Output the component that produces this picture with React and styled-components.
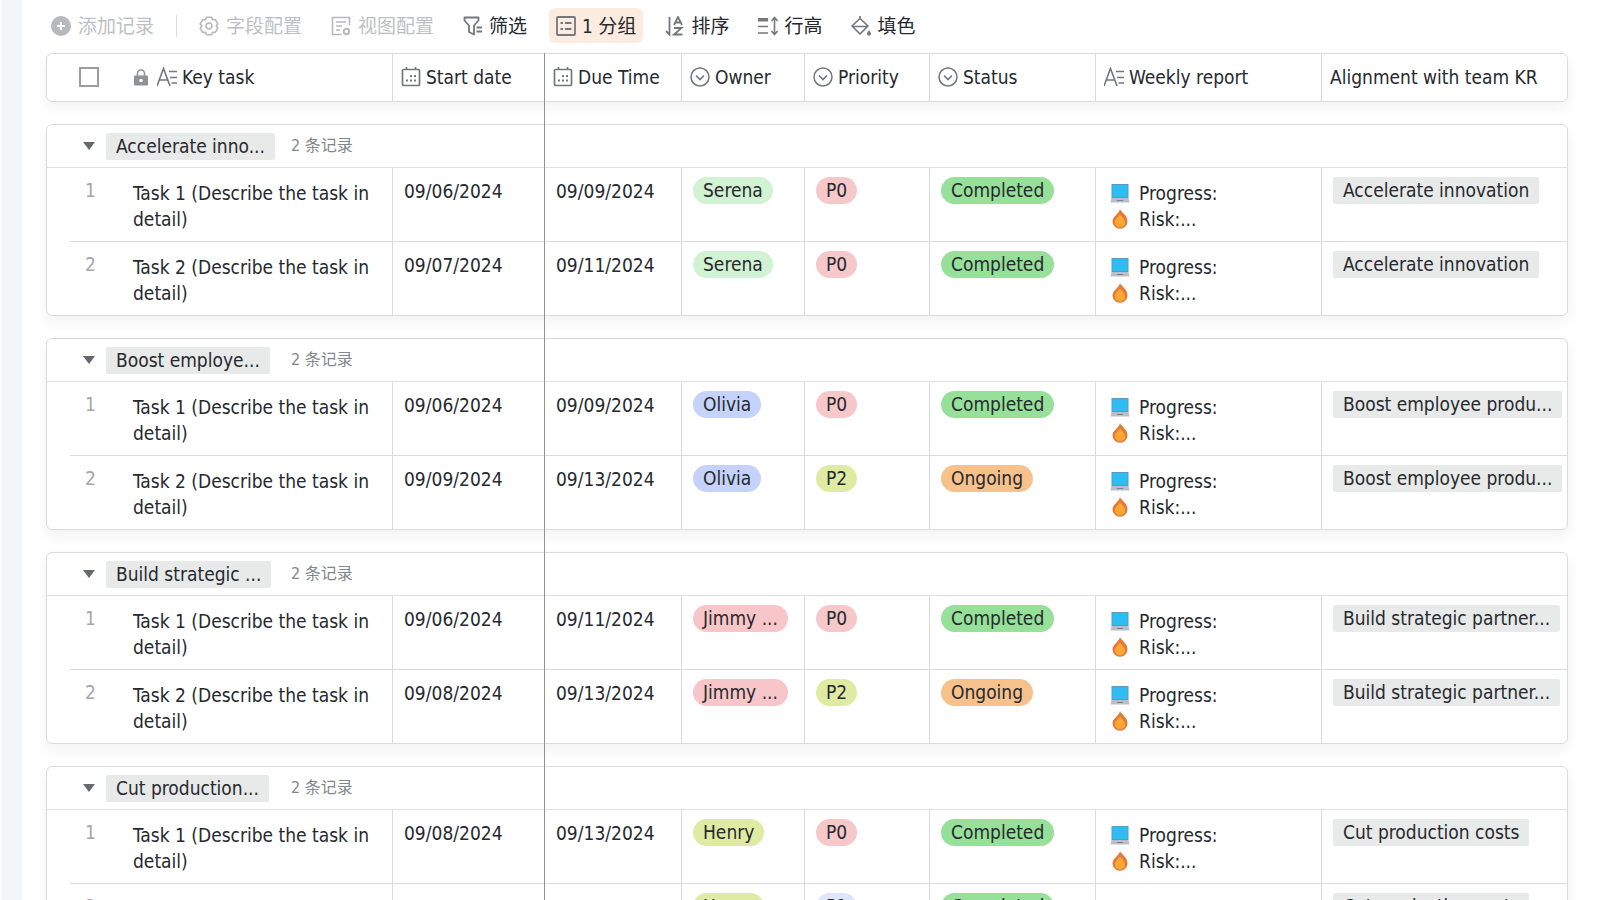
import { useState } from "react";
import styled, { createGlobalStyle } from "styled-components";

const GlobalStyle = createGlobalStyle`
    *{
        box-sizing: border-box;
    }
    body{
        margin: 0;
        background-color: #fff;
        color: #26292e;
        font-family: "DejaVu Sans Condensed", "Noto Sans CJK SC", sans-serif;
        font-size: 19px;
        line-height: 26px;
    }
    button, input{
        font: inherit;
        color: inherit;
    }
`

const Page = styled.div`
    display: flex;
    height: 100vh;
    overflow: hidden;
`

const SideEdge = styled.aside`
    flex: none;
    width: 22px;
    background-color: #f3f5f8;
    border-left: 2px solid #fbfbfc;
`

const Main = styled.main`
    flex: 1;
    min-width: 0;
    padding-right: 32px;
`

const StyledToolbar = styled.div`
    display: flex;
    align-items: center;
    gap: 15px;
    height: 53px;
    padding: 0 22px 2px;
`

const ToolButton = styled.button`
    display: flex;
    align-items: center;
    gap: 6px;
    height: 35px;
    padding: 0 7px;
    border: none;
    border-radius: 6px;
    background-color: ${({ $active }) => $active ? "#fcebdf" : "transparent"};
    white-space: nowrap;
    cursor: pointer;
    >svg{
        color: #74777c;
    }
    &:disabled{
        gap: 7px;
        color: #bdbfc2;
        cursor: default;
        >svg{
            color: #b7b9bc;
        }
    }
`

const Divider = styled.span`
    width: 1px;
    height: 22px;
    background-color: #d9dbde;
`

const Table = styled.table`
    position: relative;
    display: flex;
    flex-direction: column;
    gap: 22px;
    margin-left: 24px;
    /* edge of the frozen columns */
    &::after{
        content: "";
        position: absolute;
        top: 0;
        bottom: 0;
        left: calc(72px + (100% - 74px) * 426 / 1448);
        width: 1px;
        background-color: #909396;
    }
`

const cardStyle = `
    display: block;
    border: 1px solid #d9dbdc;
    border-radius: 6px;
    background-color: #fff;
    box-shadow: 0 6px 14px rgba(31, 35, 41, 0.06);
`

const HeadCard = styled.thead`
    ${cardStyle}
`

const GroupCard = styled.tbody`
    ${cardStyle}
`

const Row = styled.tr`
    display: grid;
    grid-template-columns: 72px 274fr 152fr 137fr 123fr 125fr 166fr 226fr 245fr;
`

const HeadCell = styled.th`
    display: flex;
    align-items: center;
    gap: 5px;
    height: 47px;
    min-width: 0;
    padding: 0 8px 1px;
    border-right: 1px solid #d9dbdc;
    font-weight: 400;
    white-space: nowrap;
    >svg{
        flex: none;
        color: #74777c;
    }
    &:first-child{
        padding-left: 32px;
        border-right: none;
    }
    &:nth-child(2){
        padding-left: 15px;
    }
    &:last-child{
        border-right: none;
    }
`

const HeadIcons = styled.span`
    display: flex;
    align-items: center;
    gap: 9px;
    color: #74777c;
`

const Checkbox = styled.input`
    appearance: none;
    flex: none;
    width: 20px;
    height: 20px;
    margin: 0;
    border: 2px solid #9b9da1;
    background-color: #fff;
    &:checked{
        background-color: #9b9da1;
    }
`

const GroupRow = styled.tr`
    display: block;
    border-bottom: 1px solid #dfe1e2;
`

const GroupCell = styled.th`
    display: flex;
    align-items: center;
    height: 42px;
    padding-left: 32px;
    font-weight: 400;
    text-align: left;
`

const Toggle = styled.button`
    display: flex;
    align-items: center;
    justify-content: center;
    width: 20px;
    height: 26px;
    margin-right: 7px;
    padding: 0;
    border: none;
    background: none;
    cursor: pointer;
    >svg{
        transform: rotate(${({ $open }) => $open ? 0 : -90}deg);
    }
`

const GroupName = styled.span`
    width: 185px;
`

const Count = styled.span`
    color: #83878d;
    font-size: 16px;
`

const Cell = styled.td`
    height: 73px;
    min-width: 0;
    padding: 9px 4px 0 11px;
    border-right: 1px solid #d9dbdc;
    white-space: nowrap;
    &:last-child{
        border-right: none;
    }
`

const IndexCell = styled(Cell)`
    margin-left: 23px;
    padding-left: 15px;
    border-right: none;
    color: #a3a6aa;
`

const TextCell = styled(Cell)`
    padding: 12px 14px 0;
    white-space: normal;
`

const DateCell = styled(Cell)`
    padding-top: 10px;
`

const TaskRow = styled(Row)`
    & + & > td{
        height: 74px;
        border-top: 1px solid #d9dbdc;
    }
`

const Tag = styled.span`
    display: inline-block;
    max-width: 100%;
    padding: 0 10px;
    border-radius: 14px;
    background-color: ${({ $color }) => $color};
    line-height: 27px;
    vertical-align: top;
`

const Chip = styled.span`
    display: inline-block;
    padding: 0 10px;
    border-radius: 2px;
    background-color: #e8eae9;
    line-height: 27px;
    vertical-align: top;
`

const ReportLine = styled.div`
    display: flex;
    align-items: center;
    gap: 9px;
`

const PlusIcon = () => (
    <svg width="20" height="20" viewBox="0 0 20 20">
        <circle cx="10" cy="10" r="10" fill="currentColor" />
        <path d="M10 6v8M6 10h8" stroke="#fff" strokeWidth="2" />
    </svg>
);

const GearIcon = () => (
    <svg width="20" height="20" viewBox="0 0 20 20" fill="none" stroke="currentColor" strokeWidth="1.6" strokeLinejoin="round">
        <path d="M7.500 1.200h5l1 2.600 2.800-.2 2.500 4.200L17.200 10l1.600 2.200-2.500 4.200-2.800-.2-1 2.600h-5l-1-2.600-2.800.2-2.500-4.200L2.800 10 1.200 7.800l2.500-4.200 2.800.2z" />
        <circle cx="10" cy="10" r="3" />
    </svg>
);

const ViewIcon = () => (
    <svg width="20" height="20" viewBox="0 0 20 20" fill="none" stroke="currentColor" strokeWidth="1.6">
        <path d="M18.500 9.500V1.500H1.500v17h9" />
        <path d="M5 6h10M5 10h6M5 14h4" />
        <circle cx="15.500" cy="15.500" r="2.700" strokeWidth="2" />
    </svg>
);

const FilterIcon = () => (
    <svg width="20" height="20" viewBox="0 0 20 20" fill="none" stroke="currentColor" strokeWidth="1.8" strokeLinejoin="round">
        <path d="M1.500 1.500h14v3L11 9.500v9l-5-2.500V9.500l-4.500-5z" />
        <path d="M13.500 11.500H19M13.500 15.500H19" />
    </svg>
);

const GroupIcon = () => (
    <svg width="20" height="20" viewBox="0 0 20 20" fill="none" stroke="currentColor" strokeWidth="1.8">
        <rect x="1" y="1" width="18" height="18" rx="1" />
        <path d="M4.500 7h2.500M4.500 13h2.500M9 7h6.500M9 13h6.500" />
    </svg>
);

const SortIcon = () => (
    <svg width="20" height="20" viewBox="0 0 20 20" fill="none" stroke="currentColor" strokeWidth="1.8">
        <path d="M4.500 1v17.500L1 15" />
        <path d="M9 9l4-8 4 8M10.500 6.500h5M9 12h7.500L9 18.500h8.500" />
    </svg>
);

const RowHeightIcon = () => (
    <svg width="20" height="20" viewBox="0 0 20 20" fill="none" stroke="currentColor" strokeWidth="1.6">
        <rect x="0" y="2" width="10" height="3.500" fill="currentColor" stroke="none" />
        <path d="M0 10.500h10M0 17h10M16.500 2v16M13.500 5l3-3.500 3 3.500M13.500 15l3 3.500 3-3.500" />
    </svg>
);

const FillIcon = () => (
    <svg width="20" height="20" viewBox="0 0 20 20" fill="none" stroke="currentColor" strokeWidth="1.7" strokeLinejoin="round">
        <path d="M9 0v3.500M9 2.500l8 7.500-8 8-8-8zM2 10.500h14" />
        <path d="M18 14c1.500 2.200 2 3 2 3.800a2 2 0 0 1-4 0c0-.8.500-1.600 2-3.800z" fill="currentColor" stroke="none" />
    </svg>
);

const LockIcon = () => (
    <svg width="14" height="20" viewBox="0 0 14 20">
        <path d="M3.500 9V6.500a3.500 3.500 0 0 1 7 0V9" fill="none" stroke="#8f9196" strokeWidth="1.6" />
        <rect x="0" y="8.500" width="14" height="10" rx="1" fill="#8f9196" />
        <circle cx="7" cy="13.500" r="1.800" fill="#fff" />
    </svg>
);

const TextIcon = () => (
    <svg width="20" height="20" viewBox="0 0 20 20" fill="none" stroke="currentColor" strokeWidth="1.600">
        <path d="M0 19L6.500 1.500l6.500 17.500M2.500 13h8M12 4.500h8M13 10.500h7M14.500 16h5.500" />
    </svg>
);

const CalendarIcon = () => (
    <svg width="20" height="20" viewBox="0 0 20 20" fill="none" stroke="currentColor" strokeWidth="1.700">
        <rect x="1.500" y="2.500" width="17" height="16" rx="1" />
        <path d="M5.500 0v3M14.500 0v3" />
        <path d="M9 9h2M13 9h2M5 13.500h2M9 13.500h2M13 13.500h2" strokeWidth="2" />
    </svg>
);

const SelectIcon = () => (
    <svg width="20" height="20" viewBox="0 0 20 20" fill="none" stroke="currentColor" strokeWidth="1.500">
        <circle cx="10" cy="10" r="9" />
        <path d="M6 8.500l4 4 4-4" strokeWidth="1.700" />
    </svg>
);

const LaptopIcon = () => (
    <svg width="20" height="20" viewBox="0 0 20 20">
        <rect x="1.500" y="1" width="17" height="14" fill="#5b9cb8" />
        <rect x="2.500" y="2" width="15" height="12" fill="#2dbdf2" />
        <path d="M1.500 15h17l1 4.500H.5z" fill="#b9bec8" />
        <path d="M7 17.500h6" stroke="#7d828c" />
    </svg>
);

const FlameIcon = () => (
    <svg width="20" height="20" viewBox="0 0 20 20">
        <path d="M10 0c.8 3 7.500 6 7.500 12.200A7.400 7.400 0 0 1 10 19.800a7.400 7.400 0 0 1-7.500-7.600C2.500 7.500 9 5 10 0z" fill="#e07c38" />
        <path d="M10 5.500c.8 2 5 4 5 8a5 5 0 0 1-10 0c0-4 4.200-6 5-8z" fill="#ffa634" />
    </svg>
);

const columns = [
    { title: "Start date", Icon: CalendarIcon },
    { title: "Due Time", Icon: CalendarIcon },
    { title: "Owner", Icon: SelectIcon },
    { title: "Priority", Icon: SelectIcon },
    { title: "Status", Icon: SelectIcon },
    { title: "Weekly report", Icon: TextIcon },
    { title: "Alignment with team KR" },
];

const colors = {
    Serena: "#d1f2d3",
    Olivia: "#c5d3fa",
    "Jimmy ...": "#f8c5c8",
    Henry: "#dfeba3",
    P0: "#f6c8c9",
    P1: "#dfe5fb",
    P2: "#dfeba3",
    Completed: "#96e09a",
    Ongoing: "#f6c18b",
};

const groups = [
    {
        name: "Accelerate inno...",
        owner: "Serena",
        kr: "Accelerate innovation",
        tasks: [
            { start: "09/06/2024", due: "09/09/2024", priority: "P0", status: "Completed" },
            { start: "09/07/2024", due: "09/11/2024", priority: "P0", status: "Completed" },
        ],
    },
    {
        name: "Boost employe...",
        owner: "Olivia",
        kr: "Boost employee produ...",
        tasks: [
            { start: "09/06/2024", due: "09/09/2024", priority: "P0", status: "Completed" },
            { start: "09/09/2024", due: "09/13/2024", priority: "P2", status: "Ongoing" },
        ],
    },
    {
        name: "Build strategic ...",
        owner: "Jimmy ...",
        kr: "Build strategic partner...",
        tasks: [
            { start: "09/06/2024", due: "09/11/2024", priority: "P0", status: "Completed" },
            { start: "09/08/2024", due: "09/13/2024", priority: "P2", status: "Ongoing" },
        ],
    },
    {
        name: "Cut production...",
        owner: "Henry",
        kr: "Cut production costs",
        tasks: [
            { start: "09/08/2024", due: "09/13/2024", priority: "P0", status: "Completed" },
            { start: "09/09/2024", due: "09/15/2024", priority: "P1", status: "Completed" },
        ],
    },
];

const Toolbar = () => (
    <StyledToolbar role="toolbar">
        <ToolButton disabled><PlusIcon />添加记录</ToolButton>
        <Divider />
        <ToolButton disabled><GearIcon />字段配置</ToolButton>
        <ToolButton disabled><ViewIcon />视图配置</ToolButton>
        <ToolButton><FilterIcon />筛选</ToolButton>
        <ToolButton $active><GroupIcon />1 分组</ToolButton>
        <ToolButton><SortIcon />排序</ToolButton>
        <ToolButton><RowHeightIcon />行高</ToolButton>
        <ToolButton><FillIcon />填色</ToolButton>
    </StyledToolbar>
);

const Group = ({ group }) => {

    const [open, setOpen] = useState(true);

    return (
        <GroupCard>
            <GroupRow>
                <GroupCell scope="rowgroup">
                    <Toggle $open={open} aria-label={group.name} aria-expanded={open} onClick={() => setOpen(!open)}>
                        <svg width="12" height="8" viewBox="0 0 12 8">
                            <path d="M0 0h12L6 8z" fill="#65686d" />
                        </svg>
                    </Toggle>
                    <GroupName><Chip>{group.name}</Chip></GroupName>
                    <Count>{`${group.tasks.length} 条记录`}</Count>
                </GroupCell>
            </GroupRow>
            {open && group.tasks.map((task, i) => (
                <TaskRow key={i}>
                    <IndexCell>{i + 1}</IndexCell>
                    <TextCell>{`Task ${i + 1} (Describe the task in detail)`}</TextCell>
                    <DateCell>{task.start}</DateCell>
                    <DateCell>{task.due}</DateCell>
                    <Cell><Tag $color={colors[group.owner]}>{group.owner}</Tag></Cell>
                    <Cell><Tag $color={colors[task.priority]}>{task.priority}</Tag></Cell>
                    <Cell><Tag $color={colors[task.status]}>{task.status}</Tag></Cell>
                    <TextCell>
                        <ReportLine><LaptopIcon />Progress:</ReportLine>
                        <ReportLine><FlameIcon />Risk:...</ReportLine>
                    </TextCell>
                    <Cell><Chip>{group.kr}</Chip></Cell>
                </TaskRow>
            ))}
        </GroupCard>
    );
}

const App = () => {
    return (
        <>
            <GlobalStyle />
            <Page>
                <SideEdge />
                <Main>
                    <Toolbar />
                    <Table>
                        <HeadCard>
                            <Row>
                                <HeadCell><Checkbox type="checkbox" aria-label="Select all" /></HeadCell>
                                <HeadCell>
                                    <HeadIcons>
                                        <LockIcon />
                                        <TextIcon />
                                    </HeadIcons>
                                    Key task
                                </HeadCell>
                                {columns.map(({ title, Icon }) => (
                                    <HeadCell key={title}>
                                        {Icon && <Icon />}
                                        {title}
                                    </HeadCell>
                                ))}
                            </Row>
                        </HeadCard>
                        {groups.map(group => <Group key={group.name} group={group} />)}
                    </Table>
                </Main>
            </Page>
        </>
    );
}

export default App;
